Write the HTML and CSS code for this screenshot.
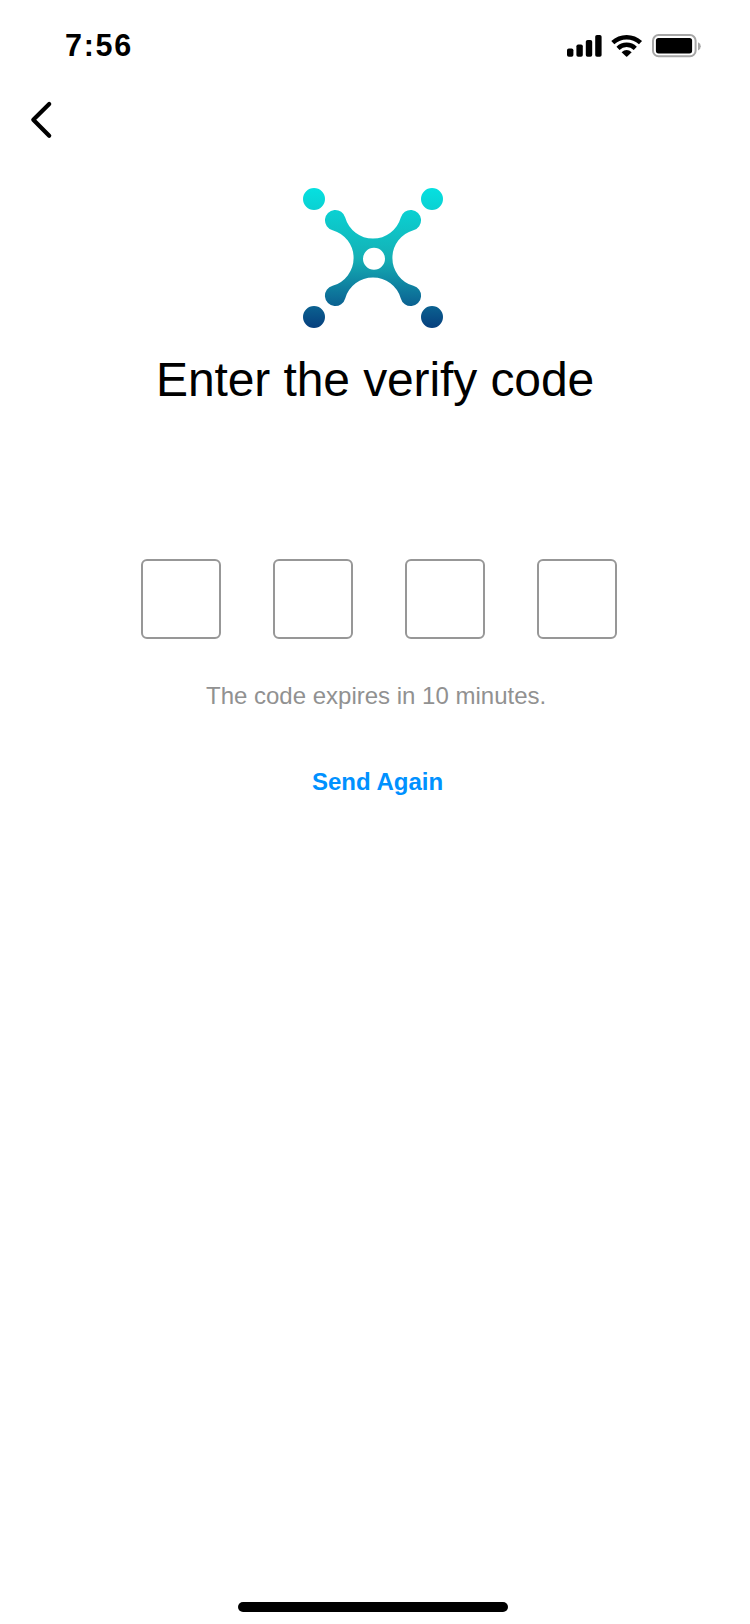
FILE: index.html
```html
<!DOCTYPE html>
<html lang="en">
<head>
<meta charset="utf-8">
<title>Enter the verify code</title>
<link rel="stylesheet" href="styles.css">
</head>
<body>
<div class="screen">
  <header class="status">
    <span class="time">7:56</span>
    <svg class="indicators" width="136" height="26" viewBox="566 33 136 26" aria-hidden="true">
      <rect x="567" y="48.5" width="6.4" height="8.2" rx="1.8"/>
      <rect x="576.4" y="44.5" width="6.4" height="12.2" rx="1.8"/>
      <rect x="585.8" y="40" width="6.4" height="16.7" rx="1.8"/>
      <rect x="595.2" y="35" width="6.4" height="21.7" rx="1.8"/>
      <g fill="none" stroke="#000" stroke-width="4.5">
        <path d="M612.8 42.7A20.3 20.3 0 0 1 640.5 42.7"/>
        <path d="M618 48.3A12.6 12.6 0 0 1 635.3 48.3"/>
      </g>
      <path d="M621.6 52.2Q626.65 48 631.7 52.2L627.2 56.6Q626.65 57.1 626.1 56.6Z"/>
      <rect x="653" y="35.1" width="42.6" height="21.2" rx="5.6" fill="none" stroke="#a6a6a6" stroke-width="2"/>
      <rect x="655.9" y="38" width="36.2" height="15.4" rx="2.6"/>
      <path d="M698 42.2Q700.8 43.3 700.8 46.2Q700.8 49.2 698 50.4Z" fill="#a6a6a6"/>
    </svg>
  </header>
  <nav class="nav">
    <svg width="24" height="40" viewBox="29 100 24 40" role="img" aria-label="Back">
      <path d="M49.2 103.9L33.3 119.7L49.2 135.7" fill="none" stroke="#000" stroke-width="4.2" stroke-linecap="round" stroke-linejoin="round"/>
    </svg>
  </nav>
  <main class="content">
    <svg class="logo" width="140" height="140" viewBox="0 0 140 140" aria-hidden="true">
      <defs>
        <linearGradient id="brand" gradientUnits="userSpaceOnUse" x1="0" y1="0" x2="0" y2="140">
          <stop offset="0" stop-color="#06e0e0"/>
          <stop offset=".5" stop-color="#14b0b5"/>
          <stop offset=".78" stop-color="#0d6f98"/>
          <stop offset="1" stop-color="#063f7d"/>
        </linearGradient>
      </defs>
      <g fill="url(#brand)">
        <path fill-rule="evenodd" d="M42.2 29.6A28.9 28.9 0 0 0 97.8 29.6A10.3 10.3 0 1 1 110.4 42.2A28.9 28.9 0 0 0 110.4 97.8A10.3 10.3 0 1 1 97.8 110.4A28.9 28.9 0 0 0 42.2 110.4A10.3 10.3 0 1 1 29.6 97.8A28.9 28.9 0 0 0 29.6 42.2A10.3 10.3 0 1 1 42.2 29.6ZM60 70.8a11 11 0 1 0 22 0a11 11 0 1 0-22 0Z"/>
        <path d="M0 11a11 11 0 1 0 22 0a11 11 0 1 0-22 0ZM118 11a11 11 0 1 0 22 0a11 11 0 1 0-22 0ZM0 129a11 11 0 1 0 22 0a11 11 0 1 0-22 0ZM118 129a11 11 0 1 0 22 0a11 11 0 1 0-22 0Z"/>
      </g>
    </svg>
    <h1 class="title">Enter the verify code</h1>
    <div class="code">
      <input class="digit" aria-label="Digit 1" maxlength="1">
      <input class="digit" aria-label="Digit 2" maxlength="1">
      <input class="digit" aria-label="Digit 3" maxlength="1">
      <input class="digit" aria-label="Digit 4" maxlength="1">
    </div>
    <p class="note">The code expires in 10 minutes.</p>
    <a class="resend">Send Again</a>
  </main>
  <div class="home"></div>
</div>
</body>
</html>
```
FILE: styles.css
```css
* {
  box-sizing: border-box;
}

body {
  margin: 0;
  background: #fff;
  color: #000;
  font-family: "Liberation Sans", Arial, sans-serif;
}

.screen {
  display: flex;
  flex-direction: column;
  width: 750px;
  height: 1624px;
  padding-bottom: 12px;
  overflow: hidden;
}

.status {
  display: flex;
  justify-content: space-between;
  align-items: flex-start;
  height: 88px;
  padding: 28px 48px 0 65px;
}

.time {
  font-size: 30.5px;
  font-weight: bold;
  line-height: 34px;
  letter-spacing: 1.7px;
}

.indicators {
  margin-top: 5px;
}

.nav {
  height: 100px;
  padding: 12px 0 0 29px;
}

.nav svg,
.logo {
  display: block;
}

.content {
  display: flex;
  flex: 1;
  flex-direction: column;
  align-items: flex-start;
}

.logo {
  margin-left: 303px;
}

.title {
  margin: 24px 0 0 156px;
  font-size: 48px;
  font-weight: normal;
  line-height: 56px;
  letter-spacing: -0.1px;
  white-space: nowrap;
}

.code {
  display: flex;
  gap: 52px;
  margin: 151px 0 0 141px;
}

.digit {
  width: 80px;
  height: 80px;
  padding: 0;
  border: 2px solid #979797;
  border-radius: 6px;
  background: #fff;
  font: inherit;
  font-size: 40px;
  text-align: center;
}

.note {
  margin: 43px 0 0 206px;
  color: #919191;
  font-size: 24px;
  line-height: 28px;
  white-space: nowrap;
}

.resend {
  margin: 58px 0 0 312px;
  color: #0091ff;
  font-size: 24px;
  font-weight: bold;
  line-height: 28px;
}

.home {
  width: 270px;
  height: 10px;
  margin-left: 238px;
  border-radius: 5px;
  background: #000;
}
```
